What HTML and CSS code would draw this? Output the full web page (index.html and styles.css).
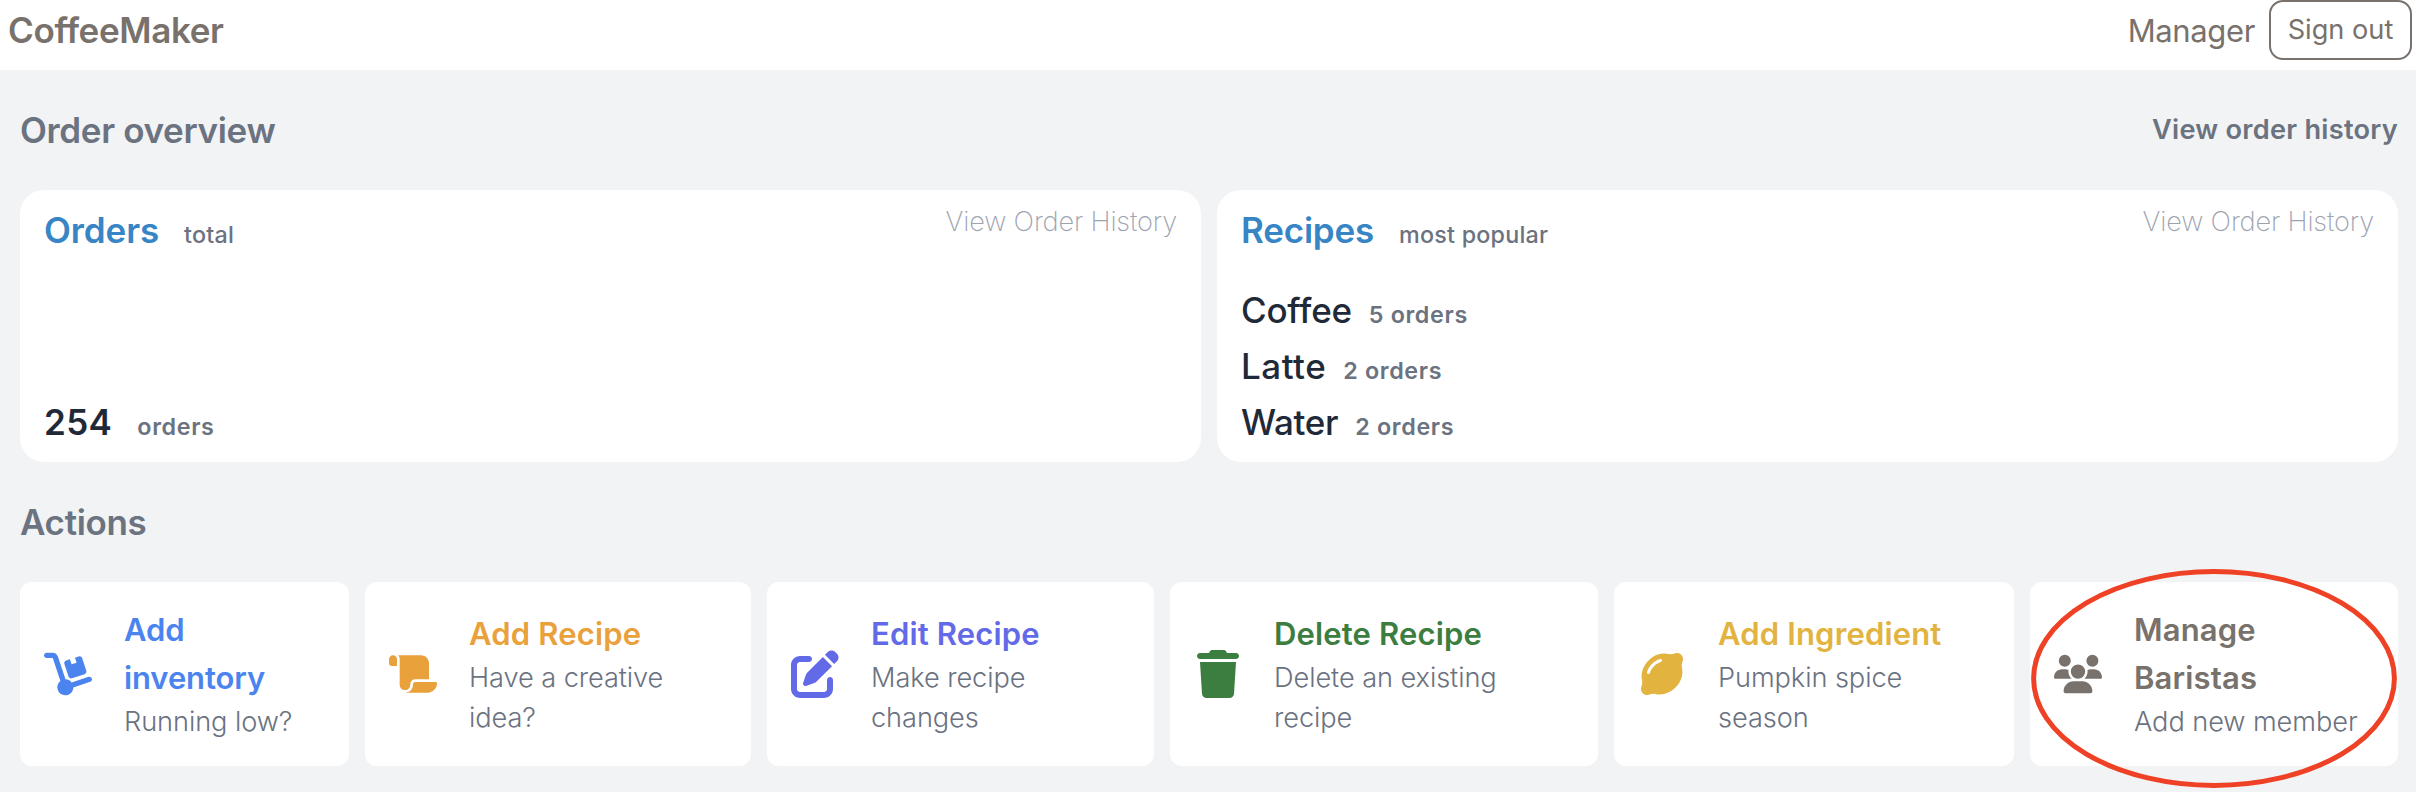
FILE: index.html
```
<!DOCTYPE html>
<html lang="en">
<head>
<meta charset="utf-8">
<title>CoffeeMaker</title>
<link rel="stylesheet" href="styles.css">
</head>
<body>
<header class="topbar">
  <div class="brand">CoffeeMaker</div>
  <div class="account">
    <span class="role">Manager</span>
    <button class="signout">Sign out</button>
  </div>
</header>
<main class="page">
  <div class="section-head">
    <h2 class="section-title">Order overview</h2>
    <a class="history">View order history</a>
  </div>
  <section class="overview">
    <article class="card">
      <div class="card-head">
        <div class="line"><h3 class="card-title">Orders</h3><span class="hint">total</span></div>
        <a class="card-link">View Order History</a>
      </div>
      <div class="line"><span class="total">254</span><span class="unit">orders</span></div>
    </article>
    <article class="card">
      <div class="card-head">
        <div class="line"><h3 class="card-title recipes">Recipes</h3><span class="hint">most popular</span></div>
        <a class="card-link">View Order History</a>
      </div>
      <div class="ranking">
        <div class="line tight"><span class="drink">Coffee</span><span class="unit">5 orders</span></div>
        <div class="line tight"><span class="drink latte">Latte</span><span class="unit">2 orders</span></div>
        <div class="line tight"><span class="drink water">Water</span><span class="unit">2 orders</span></div>
      </div>
    </article>
  </section>
  <div class="section-head">
    <h2 class="section-title">Actions</h2>
  </div>
  <section class="actions">
    <a class="action blue">
      <svg class="icon" viewBox="0 0 576 512"><path d="M0 32C0 14.3 14.3 0 32 0h72.9c27.5 0 52 17.6 60.7 43.8L257.7 320c30.1 .5 56.8 14.9 74 37l202.1-67.4c16.8-5.6 34.9 3.5 40.5 20.2s-3.5 34.9-20.2 40.5L352 417.7c-.9 52.2-43.5 94.3-96 94.3c-53 0-96-43-96-96c0-30.8 14.5-58.2 37-75.8L104.9 64H32C14.3 64 0 49.7 0 32zM244.8 134.5c-5.5-16.8 3.7-34.9 20.5-40.3L311 79.4l19.8 60.9 60.9-19.8L371.8 59.6l45.7-14.8c16.8-5.5 34.9 3.7 40.3 20.5l49.4 152.2c5.5 16.8-3.7 34.9-20.5 40.3L334.5 307.2c-16.8 5.5-34.9-3.7-40.3-20.5L244.8 134.5z"/></svg>
      <div class="text"><div class="name">Add<br>inventory</div><div class="desc">Running low?</div></div>
    </a>
    <a class="action orange">
      <svg class="icon" viewBox="0 0 576 512"><path d="M0 80v48c0 17.7 14.3 32 32 32H48 96V80c0-26.5-21.5-48-48-48S0 53.5 0 80zM112 32c10 13.4 16 30 16 48V384c0 35.3 28.7 64 64 64s64-28.7 64-64v-5.3c0-32.4 26.3-58.7 58.7-58.7H480V128c0-53-43-96-96-96H112zM464 480c61.9 0 112-50.1 112-112c0-8.8-7.2-16-16-16H314.7c-14.7 0-26.7 11.9-26.7 26.7V384c0 53-43 96-96 96H368h96z"/></svg>
      <div class="text"><div class="name">Add Recipe</div><div class="desc">Have a creative<br>idea?</div></div>
    </a>
    <a class="action indigo">
      <svg class="icon" viewBox="0 0 512 512"><path d="M471.6 21.7c-21.9-21.9-57.3-21.9-79.2 0L362.3 51.7l97.9 97.9 30.1-30.1c21.9-21.9 21.9-57.3 0-79.2L471.6 21.7zm-299.2 220c-6.1 6.1-10.8 13.6-13.5 21.9l-29.6 88.8c-2.9 8.6-.6 18.1 5.8 24.6s15.9 8.7 24.6 5.8l88.8-29.6c8.2-2.7 15.7-7.4 21.9-13.5L437.7 172.3 339.7 74.3 172.4 241.7zM96 64C43 64 0 107 0 160V416c0 53 43 96 96 96H352c53 0 96-43 96-96V320c0-17.7-14.3-32-32-32s-32 14.3-32 32v96c0 17.7-14.3 32-32 32H96c-17.7 0-32-14.3-32-32V160c0-17.7 14.3-32 32-32h96c17.7 0 32-14.3 32-32s-14.3-32-32-32H96z"/></svg>
      <div class="text"><div class="name">Edit Recipe</div><div class="desc">Make recipe<br>changes</div></div>
    </a>
    <a class="action green">
      <svg class="icon" viewBox="0 0 448 512"><path d="M135.2 17.7L128 32H32C14.3 32 0 46.3 0 64S14.3 96 32 96H416c17.7 0 32-14.3 32-32s-14.3-32-32-32H320l-7.2-14.3C307.4 6.8 296.3 0 284.2 0H163.8c-12.1 0-23.2 6.8-28.6 17.7zM416 128H32L53.2 467c1.6 25.3 22.6 45 47.9 45H346.9c25.3 0 46.3-19.7 47.9-45L416 128z"/></svg>
      <div class="text"><div class="name">Delete Recipe</div><div class="desc">Delete an existing<br>recipe</div></div>
    </a>
    <a class="action yellow">
      <svg class="icon" viewBox="0 0 448 512"><path d="M448 96c0-35.3-28.7-64-64-64c-6.6 0-13 1-19 2.9c-22.5 7-48.1 14.9-71 9c-75.2-19.1-156.4 11-213.7 68.3S-7.2 250.8 11.9 326c5.8 22.9-2 48.4-9 71C1 403 0 409.4 0 416c0 35.3 28.7 64 64 64c6.6 0 13-1 19.1-2.9c22.5-7 48.1-14.9 71-9c75.2 19.1 156.4-11 213.7-68.3s87.5-138.5 68.3-213.7c-5.8-22.9 2-48.4 9-71C447 109 448 102.6 448 96zM212.5 127.4c-54.6 16-101.1 62.5-117.1 117.1C92.9 253 84 257.8 75.5 255.4S62.2 244 64.6 235.5c19.1-65.1 73.7-119.8 138.9-138.9c8.5-2.5 17.4 2.4 19.9 10.9s-2.4 17.4-10.9 19.9z"/></svg>
      <div class="text"><div class="name">Add Ingredient</div><div class="desc">Pumpkin spice<br>season</div></div>
    </a>
    <a class="action stone">
      <svg class="icon" viewBox="0 0 640 512"><path d="M144 0a80 80 0 1 1 0 160A80 80 0 1 1 144 0zM512 0a80 80 0 1 1 0 160A80 80 0 1 1 512 0zM0 298.7C0 239.8 47.8 192 106.7 192h42.7c15.9 0 31 3.5 44.6 9.7c-1.3 7.2-1.9 14.7-1.9 22.3c0 38.2 16.8 72.5 43.3 96c-.2 0-.4 0-.7 0H21.3C9.6 320 0 310.4 0 298.7zM405.3 320c-.2 0-.4 0-.7 0c26.6-23.5 43.3-57.8 43.3-96c0-7.6-.7-15-1.9-22.3c13.6-6.3 28.7-9.7 44.6-9.7h42.7C592.2 192 640 239.8 640 298.7c0 11.8-9.6 21.3-21.3 21.3H405.3zM224 224a96 96 0 1 1 192 0 96 96 0 1 1 -192 0zM128 485.3C128 411.7 187.7 352 261.3 352H378.7C452.3 352 512 411.7 512 485.3c0 14.7-11.9 26.7-26.7 26.7H154.7c-14.7 0-26.7-11.9-26.7-26.7z"/></svg>
      <div class="text"><div class="name">Manage<br>Baristas</div><div class="desc">Add new member</div></div>
      <svg class="ring" viewBox="0 0 366 219"><ellipse cx="183" cy="109.5" rx="180.4" ry="106.9"/></svg>
    </a>
  </section>
</main>
</body>
</html>
```

FILE: styles.css
```
* { box-sizing: border-box; }
body {
  margin: 0;
  height: 792px;
  overflow: hidden;
  background: #f2f3f5;
  color: #6b7280;
  font-family: Inter, "Liberation Sans", sans-serif;
}
h2, h3 { margin: 0; }

.topbar {
  display: flex;
  align-items: center;
  justify-content: space-between;
  height: 70px;
  padding: 0 4px 10px 8px;
  background: #fff;
  color: #78716c;
}
.brand { font-size: 35px; font-weight: 600; letter-spacing: -0.36px; }
.account { display: flex; align-items: center; gap: 14px; }
.role { font-size: 31px; letter-spacing: -0.37px; }
.signout {
  width: 143px;
  height: 60px;
  padding: 0;
  border: 2px solid #78716c;
  border-radius: 14px;
  background: #fff;
  color: inherit;
  font: 27.2px/40px Inter, "Liberation Sans", sans-serif;
}

.page { padding: 0 18px 0 20px; }
.section-head {
  display: flex;
  align-items: center;
  justify-content: space-between;
  height: 120px;
}
.section-title { font-size: 35px; font-weight: 600; line-height: 56px; letter-spacing: -0.34px; }
.history { font-size: 27.2px; font-weight: 600; line-height: 40px; letter-spacing: 0.25px; }

.overview { display: grid; grid-template-columns: 1fr 1fr; gap: 16px; }
.card {
  display: flex;
  flex-direction: column;
  justify-content: space-between;
  height: 272px;
  padding: 12px 24px;
  border-radius: 24px;
  background: #fff;
}
.card-head { display: flex; align-items: flex-start; justify-content: space-between; }
.line { display: flex; align-items: baseline; gap: 25px; height: 56px; line-height: 56px; }
.tight { gap: 17px; }
.card-title { color: #3885c6; font-size: 35px; font-weight: 600; letter-spacing: -0.1px; }
.recipes { letter-spacing: -0.19px; }
.hint { font-size: 23.3px; font-weight: 500; letter-spacing: 0.23px; }
.card-link { color: #9ca3af; font-size: 27.2px; font-weight: 200; line-height: 40px; letter-spacing: -0.17px; }
.total { color: #1f2937; font-size: 35px; font-weight: 600; letter-spacing: 0.4px; }
.drink { color: #1f2937; font-size: 35px; font-weight: 500; letter-spacing: -0.22px; }
.latte { letter-spacing: 0.5px; }
.water { letter-spacing: -0.3px; }
.unit { font-size: 23.3px; font-weight: 600; letter-spacing: 0.65px; }

.actions {
  display: grid;
  grid-template-columns: 329px 386px 387px 428px 400px 368px;
  gap: 16px;
}
.action {
  position: relative;
  display: flex;
  align-items: center;
  gap: 32px;
  height: 184px;
  padding: 0 24px;
  border-radius: 12px;
  background: #fff;
}
.icon { flex: none; width: 48px; height: 48px; fill: currentColor; }
.name { font-size: 31px; font-weight: 600; line-height: 48px; letter-spacing: 0.16px; white-space: nowrap; }
.desc { color: #6b7280; font-size: 27.2px; font-weight: 350; line-height: 40px; letter-spacing: -0.08px; white-space: nowrap; }
.blue { color: #4b84ef; }
.blue .name { letter-spacing: -0.1px; }
.orange { color: #e9a13b; }
.indigo { color: #636ae8; }
.green { color: #3c7d40; }
.yellow { color: #e2b33f; }
.stone { color: #78716c; }
.ring {
  position: absolute;
  left: 1px;
  top: -13px;
  width: 366px;
  height: 219px;
  fill: none;
  stroke: #ee4125;
  stroke-width: 5;
}
```
